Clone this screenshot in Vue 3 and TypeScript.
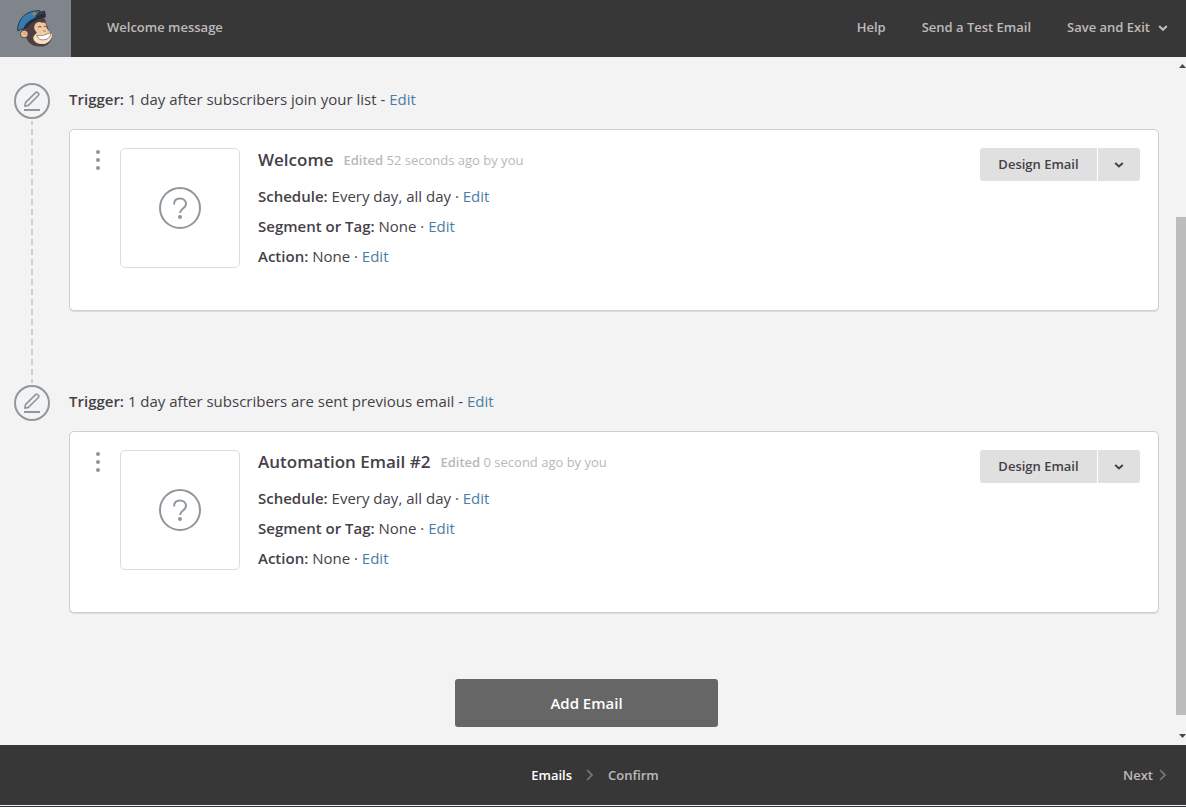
<script setup lang="ts">
interface Detail {
  label: string
  value: string
}

interface AutomationEmail {
  id: number
  trigger: string
  title: string
  edited: string
  details: Detail[]
}

const details: Detail[] = [
  { label: 'Schedule:', value: 'Every day, all day' },
  { label: 'Segment or Tag:', value: 'None' },
  { label: 'Action:', value: 'None' },
]

const emails: AutomationEmail[] = [
  {
    id: 1,
    trigger: '1 day after subscribers join your list',
    title: 'Welcome',
    edited: '52 seconds ago by you',
    details,
  },
  {
    id: 2,
    trigger: '1 day after subscribers are sent previous email',
    title: 'Automation Email #2',
    edited: '0 second ago by you',
    details,
  },
]
</script>

<template>
  <div class="app">
    <header class="topbar">
      <a href="#" class="logo" aria-label="Home">
        <svg viewBox="0 0 150 150" width="50" height="50" aria-hidden="true">
          <path d="M46 66 C46 50 66 38 92 38 C106 37 108 48 109 60 C114 66 116 74 116 80 L125 86 C128 100 122 112 112 119 C98 128 70 126 58 113 C48 104 44 84 46 66Z" fill="#4f3f42" />
          <circle cx="43" cy="87" r="12" fill="#4f3f42" />
          <circle cx="43" cy="87" r="10" fill="#e8bd93" />
          <path d="M40 84 q6 -2 6 5" fill="none" stroke="#a87a5c" stroke-width="2" />
          <path d="M74 60 C80 49 92 50 96 54 C103 50 109 55 108 64 C112 72 116 80 125 86 C128 98 118 114 102 117 C86 119 70 112 70 99 C70 91 79 88 80 82 C73 76 71 68 74 60Z" fill="#f0c9a0" />
          <path d="M75 90 C86 86 112 82 125 88 C128 98 118 112 103 116 C86 118 71 110 71 99Z" fill="#f8dfbf" />
          <path d="M80 91 Q99 95 122 83 Q122 98 109 103 Q87 110 80 91Z" fill="#fff" stroke="#6b5655" stroke-width="2" />
          <path d="M84 67 q5 -5 10 -1 M101 65 q4 -3 6 1" fill="none" stroke="#584446" stroke-width="3" />
          <path d="M99 76 q3 5 9 2" fill="none" stroke="#ad7f61" stroke-width="3" />
          <path d="M23 78 C21 48 42 22 74 18 L90 17 L90 32 C74 40 52 50 42 74 C34 71 29 74 23 78Z" fill="#357bb0" stroke="#2c3849" stroke-width="3" />
          <path d="M39 74 C44 57 58 45 76 38 C78 26 88 18 104 17 C107 23 108 30 107 37 C98 42 88 39 80 46 C73 52 64 53 58 61 C52 70 46 72 39 74Z" fill="#292d38" />
          <path d="M82 32 C89 24 97 22 103 23" fill="none" stroke="#59626c" stroke-width="2" />
          <circle cx="73" cy="26" r="5" fill="#c98b50" />
          <path d="M71 25 l4 2" stroke="#563e39" stroke-width="2" />
        </svg>
      </a>
      <h1 class="page-title">Welcome message</h1>
      <nav class="top-actions">
        <a href="#">Help</a>
        <a href="#">Send a Test Email</a>
        <button type="button" class="save-exit">
          Save and Exit
          <svg width="10" height="8" viewBox="0 0 10 8" aria-hidden="true">
            <path d="M1.2 2 L5 5.8 L8.8 2" fill="none" stroke="currentColor" stroke-width="2.2" />
          </svg>
        </button>
      </nav>
    </header>

    <div class="body">
      <main class="content">
        <ol class="steps">
          <li v-for="email in emails" :key="email.id" class="step">
            <div class="rail">
              <button type="button" class="edit-step" aria-label="Edit trigger">
                <svg width="36" height="36" viewBox="0 0 36 36" fill="none" stroke="currentColor" aria-hidden="true">
                  <circle cx="18" cy="18" r="17" stroke-width="2" />
                  <path d="M10.8 23.2 L11.5 19.6 L21.8 9.4 Q22.7 8.7 23.5 9.5 L24.6 10.6 Q25.3 11.4 24.6 12.2 L14.4 22.4 Z" stroke-width="1.6" stroke-linejoin="round" />
                  <path d="M10 27 H26" stroke-width="2" />
                </svg>
              </button>
              <svg v-if="email.id < emails.length" class="connector" width="2" height="100%" aria-hidden="true">
                <line x1="1" y1="0" x2="1" y2="100%" stroke="#cdcdcd" stroke-width="2" stroke-dasharray="6 4" stroke-dashoffset="2" />
              </svg>
            </div>
            <div class="step-main">
              <p class="trigger"><strong>Trigger:</strong> {{ email.trigger }} - <a href="#">Edit</a></p>
              <article class="card">
                <button type="button" class="handle" aria-label="Reorder email">
                  <svg width="4" height="20" viewBox="0 0 4 20" fill="currentColor" aria-hidden="true">
                    <circle cx="2" cy="2" r="2" />
                    <circle cx="2" cy="10" r="2" />
                    <circle cx="2" cy="18" r="2" />
                  </svg>
                </button>
                <div class="thumb">
                  <svg width="42" height="42" viewBox="0 0 42 42" fill="none" stroke="currentColor" aria-hidden="true">
                    <circle cx="21" cy="21" r="20" stroke-width="2" />
                    <path d="M15 17.5 C15 13.5 17.5 11.5 21 11.5 C24.8 11.5 27 14 27 17 C27 21.5 21 21.5 21 26" stroke-width="2" />
                    <circle cx="21" cy="30" r="2" fill="currentColor" stroke="none" />
                  </svg>
                </div>
                <div class="info">
                  <div class="heading">
                    <h2>{{ email.title }}</h2>
                    <span class="edited"><strong>Edited</strong> {{ email.edited }}</span>
                  </div>
                  <p v-for="detail in email.details" :key="detail.label" class="detail">
                    <strong>{{ detail.label }}</strong> {{ detail.value }} · <a href="#">Edit</a>
                  </p>
                </div>
                <div class="split">
                  <button type="button" class="design">Design Email</button>
                  <button type="button" class="more" aria-label="More options">
                    <svg width="10" height="8" viewBox="0 0 10 8" aria-hidden="true">
                      <path d="M1.2 2 L5 5.4 L8.8 2" fill="none" stroke="currentColor" stroke-width="2" />
                    </svg>
                  </button>
                </div>
              </article>
            </div>
          </li>
        </ol>
        <button type="button" class="add">Add Email</button>
      </main>
      <div class="scrollbar" aria-hidden="true">
        <svg class="arrow" width="7" height="4" viewBox="0 0 7 4"><path d="M0 4 L3.5 0 L7 4Z" fill="#4d4548" /></svg>
        <div class="track"><div class="scroll-thumb"></div></div>
        <svg class="arrow" width="7" height="4" viewBox="0 0 7 4"><path d="M0 0 L3.5 4 L7 0Z" fill="#4d4548" /></svg>
      </div>
    </div>

    <footer class="bottombar">
      <nav class="crumbs">
        <a href="#" class="current">Emails</a>
        <svg width="8" height="12" viewBox="0 0 8 12" aria-hidden="true">
          <path d="M1.2 1.2 L6 6 L1.2 10.8" fill="none" stroke="#737373" stroke-width="1.8" />
        </svg>
        <a href="#">Confirm</a>
      </nav>
      <a href="#" class="next">
        Next
        <svg width="8" height="12" viewBox="0 0 8 12" aria-hidden="true">
          <path d="M1.2 1.2 L6 6 L1.2 10.8" fill="none" stroke="#737373" stroke-width="1.8" />
        </svg>
      </a>
    </footer>
  </div>
</template>

<style>
body {
  margin: 0;
  background: #f3f3f3;
}
</style>

<style scoped>
.app {
  display: flex;
  flex-direction: column;
  min-height: 100vh;
  box-sizing: border-box;
  background: #f3f3f3;
  color: #454148;
  font: 15px/24px "Open Sans", "Noto Sans", sans-serif;
}

h1, h2, p, ol {
  margin: 0;
  padding: 0;
}

strong {
  font-weight: 600;
}

a {
  color: #4a7ea6;
  text-decoration: none;
}

button {
  margin: 0;
  padding: 0;
  border: 0;
  background: none;
  color: inherit;
  font: inherit;
  cursor: pointer;
}

svg {
  display: block;
  flex: none;
}

.topbar {
  display: flex;
  align-items: stretch;
  height: 57px;
  padding-right: 18px;
  background: #373737;
  color: #bfbaba;
  font-size: 13px;
  font-weight: 600;
  line-height: 55px;
}

.logo {
  display: flex;
  align-items: flex-end;
  justify-content: center;
  width: 71px;
  box-sizing: border-box;
  padding: 0 1px 2px 0;
  background: #80858b;
}

.page-title {
  margin-left: 36px;
  font-size: 13px;
  font-weight: 600;
}

.top-actions {
  display: flex;
  gap: 36px;
  margin-left: auto;
}

.top-actions a {
  color: inherit;
}

.save-exit {
  display: flex;
  align-items: center;
  gap: 8px;
  height: 55px;
}

.body {
  display: flex;
  flex: 1;
}

.content {
  display: flex;
  flex: 1;
  flex-direction: column;
  padding: 26px 17px 18px 14px;
}

.steps {
  list-style: none;
}

.step {
  display: flex;
  gap: 19px;
}

.rail {
  display: flex;
  flex-direction: column;
  align-items: center;
  width: 36px;
}

.edit-step {
  color: #8f979e;
}

.connector {
  flex: 1;
  min-height: 0;
  margin: 2px 0;
}

.step-main {
  flex: 1;
  padding: 4px 0 74px;
}

.step:last-child .step-main {
  padding-bottom: 66px;
}

.trigger {
  margin-bottom: 18px;
}

.card {
  display: flex;
  align-items: flex-start;
  min-height: 182px;
  box-sizing: border-box;
  padding: 18px;
  border: 1px solid #cfcfcf;
  border-radius: 5px;
  background: #fff;
  box-shadow: 0 1px 0 #dcdcdc;
}

.handle {
  margin: 2px 20px 0 8px;
  color: #8f979e;
}

.thumb {
  display: flex;
  align-items: center;
  justify-content: center;
  width: 120px;
  height: 120px;
  box-sizing: border-box;
  border: 1px solid #dcdcdc;
  border-radius: 5px;
  color: #8f979e;
}

.info {
  flex: 1;
  margin-left: 18px;
}

.heading {
  display: flex;
  align-items: center;
  gap: 10px;
  margin-bottom: 9px;
}

h2 {
  font-size: 17px;
  font-weight: 600;
}

.edited {
  color: #b8b8b8;
  font-size: 13px;
}

.detail {
  line-height: 30px;
}

.split {
  display: flex;
  gap: 1px;
  font-size: 13px;
  font-weight: 600;
}

.design,
.more {
  height: 33px;
  background: #e0e0e0;
}

.design {
  min-width: 117px;
  padding: 0 18px 2px;
  border-radius: 3px 0 0 3px;
}

.more {
  padding: 0 16px;
  border-radius: 0 3px 3px 0;
}

.add {
  align-self: center;
  width: 263px;
  height: 48px;
  border-radius: 3px;
  background: #666;
  color: #fff;
  font-weight: 600;
}

.scrollbar {
  display: flex;
  flex-direction: column;
  width: 10px;
  padding: 7px 0;
}

.arrow {
  align-self: flex-end;
}

.track {
  display: flex;
  flex: 1;
  flex-direction: column;
  justify-content: flex-end;
  padding-bottom: 19px;
}

.scroll-thumb {
  height: 77%;
  background: #bcbcbc;
}

.bottombar {
  display: grid;
  grid-template-columns: 1fr auto 1fr;
  align-items: center;
  height: 60px;
  padding: 0 19px 0 23px;
  border-bottom: 1px solid #f2f2f2;
  box-shadow: 0 1px 0 #2c3238;
  margin-bottom: 1px;
  background: #373737;
  font-size: 13px;
  font-weight: 600;
}

.bottombar a {
  color: #bfbaba;
}

.crumbs {
  display: flex;
  grid-column: 2;
  align-items: center;
  gap: 14px;
}

.bottombar .current {
  color: #fff;
}

.next {
  display: flex;
  align-items: center;
  justify-self: end;
  gap: 6px;
}
</style>
